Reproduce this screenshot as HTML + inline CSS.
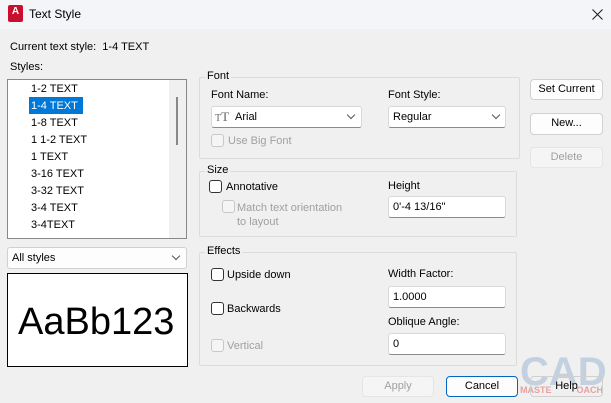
<!DOCTYPE html>
<html><head><style>
*{box-sizing:border-box;margin:0;padding:0}
body{width:611px;height:403px;background:#f0f0f0;font-family:"Liberation Sans",Arial,sans-serif;font-size:11px;color:#000;position:relative;overflow:hidden}
.a{position:absolute;white-space:nowrap}
.title{left:0;top:0;width:611px;height:29px;background:#f3f5f9}
.grp{position:absolute;border:1px solid #dcdcdc;border-radius:2px}
.gl{position:absolute;background:#f0f0f0;padding:0 2px;top:-8px;left:6px}
.inp{position:absolute;background:#fff;border:1px solid #d9d9d9;border-bottom:1px solid #8a8a8a;border-radius:3px;padding-left:4px;line-height:20px}
.btn{position:absolute;background:#fdfdfd;border:1px solid #d0d0d0;border-radius:4px;text-align:center;line-height:19px}
.dis{color:#a0a0a0;background:#f5f5f5;border-color:#e5e5e5}
.cb{position:absolute;width:13px;height:13px;border:1px solid #333;border-radius:3px;background:#fff}
.cbd{border-color:#c8c8c8;background:#f5f5f5}
.chev{position:absolute;width:6px;height:6px;border-right:1px solid #555;border-bottom:1px solid #555;transform:rotate(45deg)}
</style></head><body>
<div class="a title"></div>
<div class="a" style="left:8px;top:5px;width:15px;height:17px;background:#c8102e;border-radius:2px;color:#fff;font-weight:bold;font-size:10px;text-align:center;line-height:13px">A</div>
<div class="a" style="left:29px;top:7px;font-size:12px">Text Style</div>
<svg class="a" style="left:592px;top:9px" width="11" height="11"><path d="M0.5 0.5L10.5 10.5M10.5 0.5L0.5 10.5" stroke="#222" stroke-width="1.1"/></svg>

<div class="a" style="left:10px;top:41px">Current text style:&nbsp; 1-4 TEXT</div>
<div class="a" style="left:10px;top:61px">Styles:</div>
<div class="a" style="left:7px;top:79px;width:180px;height:160px;background:#fff;border:1px solid #888"></div>
<div class="a" style="left:169px;top:80px;width:17px;height:158px;background:#f0f0f0"></div>
<div class="a" style="left:176px;top:97px;width:2px;height:48px;background:#888"></div>
<div class="a" style="left:29px;top:97px;width:54px;height:17px;background:#0078d7"></div>
<div class="a" style="left:31px;top:81px;line-height:17px">1-2 TEXT<br><span style="color:#fff">1-4 TEXT</span><br>1-8 TEXT<br>1 1-2 TEXT<br>1 TEXT<br>3-16 TEXT<br>3-32 TEXT<br>3-4 TEXT<br>3-4TEXT</div>

<div class="inp" style="left:7px;top:247px;width:180px;height:22px;background:#fdfdfd;border-color:#d0d0d0">All styles</div>
<div class="chev" style="left:173px;top:253px"></div>
<div class="a" style="left:7px;top:273px;width:181px;height:94px;background:#fff;border:1px solid #000"></div>
<div class="a" style="left:18px;top:300px;font-size:38px;line-height:44px">AaBb123</div>

<div class="grp" style="left:199px;top:77px;width:321px;height:82px"><span class="gl" style="left:5px">Font</span></div>
<div class="a" style="left:211px;top:89px">Font Name:</div>
<div class="inp" style="left:211px;top:106px;width:151px;height:22px;padding-left:23px">Arial</div>
<div class="a" style="left:215px;top:109px;font-family:'Liberation Serif',serif;color:#666;font-size:10px">T<span style="font-size:13px">T</span></div>
<div class="chev" style="left:348px;top:112px"></div>
<div class="a" style="left:388px;top:89px">Font Style:</div>
<div class="inp" style="left:388px;top:106px;width:118px;height:22px">Regular</div>
<div class="chev" style="left:493px;top:112px"></div>
<div class="cb cbd" style="left:211px;top:134px"></div>
<div class="a" style="left:228px;top:135px;color:#a0a0a0">Use Big Font</div>

<div class="grp" style="left:199px;top:171px;width:318px;height:66px"><span class="gl" style="left:5px">Size</span></div>
<div class="cb" style="left:209px;top:180px"></div>
<div class="a" style="left:226px;top:181px">Annotative</div>
<div class="cb cbd" style="left:222px;top:200px"></div>
<div class="a" style="left:237px;top:201px;color:#a0a0a0;line-height:14px">Match text orientation<br>to layout</div>
<div class="a" style="left:388px;top:180px">Height</div>
<div class="inp" style="left:388px;top:196px;width:118px;height:22px">0'-4 13/16"</div>

<div class="grp" style="left:199px;top:252px;width:318px;height:114px"><span class="gl" style="left:5px">Effects</span></div>
<div class="cb" style="left:211px;top:268px"></div>
<div class="a" style="left:227px;top:269px">Upside down</div>
<div class="cb" style="left:211px;top:302px"></div>
<div class="a" style="left:227px;top:303px">Backwards</div>
<div class="cb cbd" style="left:211px;top:339px"></div>
<div class="a" style="left:227px;top:340px;color:#a0a0a0">Vertical</div>
<div class="a" style="left:388px;top:268px">Width Factor:</div>
<div class="inp" style="left:388px;top:286px;width:118px;height:22px">1.0000</div>
<div class="a" style="left:388px;top:316px">Oblique Angle:</div>
<div class="inp" style="left:388px;top:333px;width:118px;height:22px">0</div>

<div class="btn" style="left:530px;top:79px;width:73px;height:21px">Set Current</div>
<div class="btn" style="left:530px;top:113px;width:73px;height:22px">New...</div>
<div class="btn dis" style="left:530px;top:147px;width:73px;height:21px">Delete</div>

<div class="a" style="left:520px;top:350px;width:91px;height:44px;color:#b7c9dd;font-size:40px;font-weight:bold;line-height:44px;opacity:.8">CAD</div>
<div class="btn dis" style="left:362px;top:376px;width:72px;height:21px">Apply</div>
<div class="btn" style="left:446px;top:376px;width:72px;height:21px;border:1px solid #0067c0">Cancel</div>
<div class="a" style="left:520px;top:385px;color:#e8a0a0;font-size:9px;font-weight:bold">MASTE&nbsp;&nbsp;&nbsp;&nbsp;&nbsp;&nbsp;&nbsp;&nbsp;&nbsp;&nbsp;OACH</div>
<div class="btn" style="left:530px;top:376px;width:73px;height:21px;background:transparent">Help</div>
</body></html>
